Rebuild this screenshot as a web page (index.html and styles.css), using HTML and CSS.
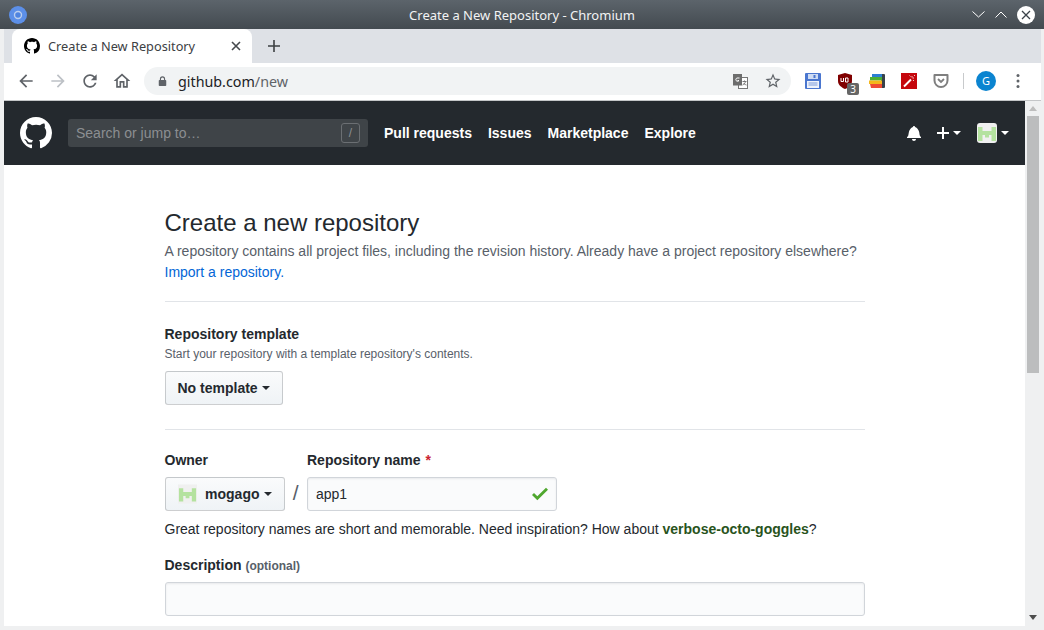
FILE: index.html
```html
<!DOCTYPE html>
<html lang="en">
<head>
  <meta charset="UTF-8">
  <title>Create a New Repository - Chromium</title>
  <link rel="stylesheet" href="styles.css">
</head>
<body>
  <svg class="defs" width="0" height="0">
    <symbol id="mark" viewBox="0 0 16 16"><path d="M8 0C3.58 0 0 3.58 0 8c0 3.54 2.29 6.53 5.47 7.59.4.07.55-.17.55-.38 0-.19-.01-.82-.01-1.49-2.01.37-2.53-.49-2.69-.94-.09-.23-.48-.94-.82-1.13-.28-.15-.68-.52-.01-.53.63-.01 1.08.58 1.23.82.72 1.21 1.87.87 2.33.66.07-.52.28-.87.51-1.07-1.78-.2-3.64-.89-3.64-3.95 0-.87.31-1.59.82-2.15-.08-.2-.36-1.02.08-2.12 0 0 .67-.21 2.2.82.64-.18 1.32-.27 2-.27.68 0 1.36.09 2 .27 1.53-1.04 2.2-.82 2.2-.82.44 1.1.16 1.92.08 2.12.51.56.82 1.27.82 2.15 0 3.07-1.87 3.75-3.65 3.95.29.25.54.73.54 1.48 0 1.07-.01 1.93-.01 2.2 0 .21.15.46.55.38A8.013 8.013 0 0016 8c0-4.42-3.58-8-8-8z"/></symbol>
    <symbol id="identicon" viewBox="0 0 20 20"><rect width="20" height="20" fill="#f0f0f0"/><path fill="#b4e29f" d="M1 4h4.500v14H1zM14.500 4H19v14h-4.500zM5.500 8h9v4h-9zM8 12h4v2.500H8z"/></symbol>
  </svg>

  <div class="titlebar">
    <svg class="chromium" width="18" height="18" viewBox="0 0 18 18"><circle cx="9" cy="9" r="9" fill="#5c8fe8"/><circle cx="9" cy="9" r="3.500" fill="#4f84e0" stroke="#bccfee" stroke-width="1.400"/></svg>
    <div class="window-title">Create a New Repository - Chromium</div>
    <div class="window-controls">
      <svg width="13" height="7" viewBox="0 0 13 7"><path d="M.5.5 6.500 6l6-5.500" fill="none" stroke="#fff"/></svg>
      <svg width="12" height="7" viewBox="0 0 12 7"><path d="M.5 6.500 6 1l5.500 5.500" fill="none" stroke="#fff"/></svg>
      <svg width="18" height="18" viewBox="0 0 18 18"><circle cx="9" cy="9" r="9" fill="#fff"/><path d="M5 5l8 8M13 5l-8 8" stroke="#3b4249" stroke-width="1.300"/></svg>
    </div>
  </div>

  <div class="window">
    <div class="tabstrip">
      <div class="tab">
        <svg class="favicon" width="16" height="16"><use href="#mark"/></svg>
        <span class="tab-title">Create a New Repository</span>
        <svg class="tab-close" width="10" height="10" viewBox="0 0 10 10"><path d="M1 1l8 8M9 1l-8 8" stroke="#45494d" stroke-width="1.600"/></svg>
      </div>
      <svg class="new-tab" width="12" height="12" viewBox="0 0 12 12"><path d="M6 0v12M0 6h12" stroke="#3c4043" stroke-width="1.600"/></svg>
    </div>

    <div class="toolbar">
      <svg class="tool back" width="20" height="20" viewBox="0 0 24 24"><path d="M20 11H7.830l5.590-5.590L12 4l-8 8 8 8 1.410-1.410L7.830 13H20v-2z"/></svg>
      <svg class="tool forward" width="20" height="20" viewBox="0 0 24 24"><path d="M4 11h12.170l-5.590-5.590L12 4l8 8-8 8-1.410-1.410L16.170 13H4v-2z"/></svg>
      <svg class="tool" width="20" height="20" viewBox="0 0 24 24"><path d="M17.650 6.350C16.200 4.900 14.210 4 12 4c-4.420 0-7.990 3.580-7.990 8s3.570 8 7.990 8c3.730 0 6.840-2.550 7.730-6h-2.080c-.82 2.330-3.040 4-5.650 4-3.310 0-6-2.690-6-6s2.690-6 6-6c1.660 0 3.140.69 4.220 1.780L13 11h7V4l-2.350 2.350z"/></svg>
      <svg class="tool" width="20" height="20" viewBox="0 0 24 24"><path d="M12 5.690l5 4.500V18h-2v-6H9v6H7v-7.810l5-4.500M12 3L2 12h3v8h6v-6h2v6h6v-8h3L12 3z"/></svg>
      <div class="omnibox">
        <svg width="9" height="11" viewBox="0 0 12 14"><path fill="#5f6368" d="M10 5H9.500V3.500a3.500 3.500 0 0 0-7 0V5H2a1 1 0 0 0-1 1v6a1 1 0 0 0 1 1h8a1 1 0 0 0 1-1V6a1 1 0 0 0-1-1zM4 3.500a2 2 0 0 1 4 0V5H4z"/></svg>
        <span class="url">github.com<span class="url-path">/new</span></span>
        <svg class="translate" width="15" height="15" viewBox="0 0 15 15"><rect x="5.500" y="3.500" width="9" height="11" fill="#fff" stroke="#777"/><rect width="9" height="11.500" fill="#6d6d6d"/><path d="M6.500 4H4a1.700 1.700 0 1 0 2 2.500H4.500" fill="none" stroke="#fff"/><path d="M9.500 7.500h4M11.500 6.500v1M12.500 7.500c-.5 2-1.500 3-3 3.500M10.500 9c.5 1 1.500 1.500 3 2" fill="none" stroke="#777"/></svg>
        <svg class="star" width="18" height="18" viewBox="0 0 24 24"><path fill="#5f6368" d="M22 9.240l-7.190-.62L12 2 9.190 8.630 2 9.240l5.460 4.730L5.820 21 12 17.270 18.180 21l-1.630-7.030L22 9.240zM12 15.400l-3.760 2.270 1-4.280-3.320-2.880 4.380-.38L12 6.100l1.710 4.040 4.380.38-3.320 2.880 1 4.280L12 15.400z"/></svg>
      </div>
      <div class="extensions">
        <svg width="16" height="16" viewBox="0 0 16 16"><rect width="16" height="16" rx="1" fill="#4a76cf"/><rect x="3" y="1" width="10" height="5" fill="#cfdcf3"/><rect x="8.500" y="2" width="2" height="3" fill="#4a76cf"/><rect x="2" y="8" width="12" height="7" fill="#eef2fa"/><path d="M3.500 10h9M3.500 12h9" stroke="#7d9bdb"/></svg>
        <div class="ublock">
          <svg width="14" height="16" viewBox="0 0 14 16"><path fill="#800000" d="M7 0l7 2v6c0 4-3.500 6.500-7 8-3.500-1.500-7-4-7-8V2z"/><path d="M3 5v3.500h2.500V5M7.500 5h2.500v4H7.500z" fill="none" stroke="#fff"/></svg>
          <span class="badge">3</span>
        </div>
        <svg width="16" height="16" viewBox="0 0 16 16"><path fill="#39424a" d="M12 1h3a1 1 0 0 1 1 1v12a1 1 0 0 1-1 1h-3z"/><path fill="#2c7fd3" d="M3 1h10v3H3z"/><path fill="#4caf35" d="M1 4h12v3.500H1z"/><path fill="#f4b71c" d="M0 7.500h13V11H0z"/><path fill="#ee4b35" d="M1 11h12v4H2z"/></svg>
        <svg width="16" height="16" viewBox="0 0 16 16"><rect width="16" height="16" fill="#c5070d"/><path d="M3 13.500 10 6.500" stroke="#fff" stroke-width="2"/><path d="M11 3v1.500M13 5h-1.500M8.500 2.500l1 1M14 2l-1 1M13 8l-1-1" stroke="#f3c7c7"/></svg>
        <svg width="16" height="16" viewBox="0 0 16 16"><path d="M1.500 2h13v5.500a6.500 6.500 0 0 1-13 0z" fill="#fff" stroke="#7f7f7f" stroke-width="2" stroke-linejoin="round"/><path d="M5 6l3 3 3-3" fill="none" stroke="#7f7f7f" stroke-width="1.800"/></svg>
      </div>
      <div class="toolbar-sep"></div>
      <div class="profile">G</div>
      <svg class="menu-dots" width="4" height="14" viewBox="0 0 4 14"><circle cx="2" cy="1.500" r="1.500"/><circle cx="2" cy="7" r="1.500"/><circle cx="2" cy="12.500" r="1.500"/></svg>
    </div>

    <div class="viewport">
      <div class="page">
        <header class="gh-header">
          <svg class="gh-logo" width="32" height="32"><use href="#mark"/></svg>
          <div class="gh-search">
            <span>Search or jump to…</span>
            <span class="slash-key">/</span>
          </div>
          <nav class="gh-nav">
            <a>Pull requests</a>
            <a>Issues</a>
            <a>Marketplace</a>
            <a>Explore</a>
          </nav>
          <div class="gh-actions">
            <svg class="bell" width="14" height="16" viewBox="0 0 14 16"><path d="M14 12v1H0v-1l.73-.58c.77-.77.81-2.550 1.190-4.420C2.690 3.230 6 2 6 2c0-.55.45-1 1-1s1 .45 1 1c0 0 3.390 1.230 4.160 5 .38 1.880.42 3.660 1.190 4.420l.65.58zm-7 4c1.110 0 2-.89 2-2H5c0 1.110.89 2 2 2z"/></svg>
            <span class="gh-plus">
              <svg width="12" height="12" viewBox="0 0 12 12"><path d="M6 0v12M0 6h12" stroke="#fff" stroke-width="2"/></svg>
              <i class="caret caret-white"></i>
            </span>
            <span class="gh-avatar">
              <svg class="rounded" width="20" height="20"><use href="#identicon"/></svg>
              <i class="caret caret-white"></i>
            </span>
          </div>
        </header>

        <main class="content">
          <div class="subhead">
            <h1>Create a new repository</h1>
            <p>A repository contains all project files, including the revision history. Already have a project repository elsewhere?<br><a class="link">Import a repository.</a></p>
          </div>

          <div class="template-section">
            <label class="field-label">Repository template</label>
            <p class="note">Start your repository with a template repository's contents.</p>
            <button class="btn">No template <i class="caret"></i></button>
          </div>

          <div class="owner-section">
            <div class="owner-row">
              <div>
                <label class="field-label">Owner</label>
                <button class="btn owner-btn">
                  <svg width="20" height="20"><use href="#identicon"/></svg>
                  mogago <i class="caret"></i>
                </button>
              </div>
              <span class="owner-slash">/</span>
              <div>
                <label class="field-label">Repository name <span class="required">*</span></label>
                <div class="input name-input">
                  <span>app1</span>
                  <svg width="16" height="14" viewBox="0 3 12 10.500" preserveAspectRatio="none"><path fill="#4fa72e" d="M12 5l-8 8-4-4 1.500-1.500L4 10l6.500-6.500z"/></svg>
                </div>
              </div>
            </div>
            <p class="hint">Great repository names are short and memorable. Need inspiration? How about <strong class="suggestion">verbose-octo-goggles</strong>?</p>
            <label class="field-label desc-label">Description <span class="optional">(optional)</span></label>
            <div class="input desc-input"></div>
          </div>
        </main>
      </div>

      <div class="scrollbar">
        <i class="arrow-up"></i>
        <div class="thumb"></div>
        <i class="arrow-down"></i>
      </div>
    </div>
  </div>
</body>
</html>
```

FILE: styles.css
```css
html, body {
  margin: 0;
  height: 630px;
  overflow: hidden;
}
body {
  display: flex;
  flex-direction: column;
  font-family: "Liberation Sans", Arial, sans-serif;
  font-size: 14px;
  color: #24292e;
  background: #eff0f1;
}
.defs {
  position: absolute;
}
button {
  font-family: inherit;
}

/* window frame */
.titlebar {
  height: 29px;
  flex: none;
  display: flex;
  align-items: center;
  justify-content: space-between;
  padding: 0 9px;
  background: linear-gradient(#5c646b, #434a50);
}
.chromium {
  margin-right: 45px;
}
.window-title {
  flex: 1;
  text-align: center;
  font: 13px "Noto Sans", sans-serif;
  color: #f2f3f4;
}
.window-controls {
  display: flex;
  align-items: center;
  gap: 10px;
}
.window {
  flex: 1;
  min-height: 0;
  display: flex;
  flex-direction: column;
  padding: 0 3px 4px 4px;
}

/* tabs */
.tabstrip {
  height: 34px;
  flex: none;
  display: flex;
  align-items: center;
  background: #dee1e6;
  padding-left: 8px;
}
.tab {
  width: 240px;
  height: 34px;
  box-sizing: border-box;
  display: flex;
  align-items: center;
  padding: 0 11px 0 12px;
  background: #fff;
  border-radius: 8px 8px 0 0;
}
.favicon {
  flex: none;
}
.tab-title {
  flex: 1;
  margin-left: 8px;
  font: 12.750px "Noto Sans", sans-serif;
  color: #3c4043;
}
.new-tab {
  margin-left: 16px;
}

/* toolbar */
.toolbar {
  height: 38px;
  box-sizing: border-box;
  flex: none;
  display: flex;
  align-items: center;
  background: #fff;
  border-bottom: 1px solid #c4c6c8;
  padding: 0 0 1px 12px;
}
.tool {
  fill: #5f6368;
  margin-right: 12px;
}
.forward {
  fill: #bdc1c6;
}
.omnibox {
  width: 647px;
  height: 28px;
  display: flex;
  align-items: center;
  box-sizing: border-box;
  padding: 0 9px 0 14px;
  border-radius: 14px;
  background: #f1f3f4;
}
.url {
  flex: 1;
  margin-left: 11px;
  font: 14.300px "Noto Sans", sans-serif;
  color: #202124;
}
.url-path {
  color: #5f6368;
}
.translate {
  margin-right: 16px;
}
.extensions {
  display: flex;
  align-items: center;
  gap: 16px;
  margin-left: 14px;
}
.ublock {
  position: relative;
  height: 16px;
  margin: 0 1px;
}
.ublock svg {
  display: block;
}
.badge {
  position: absolute;
  left: 9px;
  top: 10px;
  width: 12px;
  height: 12px;
  border-radius: 2px;
  background: #666;
  color: #fff;
  font: 10px/12px "Noto Sans", sans-serif;
  text-align: center;
}
.toolbar-sep {
  width: 1px;
  height: 16px;
  margin-left: 14px;
  background: #c8cacc;
}
.profile {
  width: 20px;
  height: 20px;
  margin-left: 12px;
  border-radius: 50%;
  background: #0b84d0;
  color: #fff;
  font: 11px/20px "Noto Sans", sans-serif;
  text-align: center;
}
.menu-dots {
  margin-left: 20px;
  fill: #5f6368;
}

/* page + scrollbar */
.viewport {
  flex: 1;
  min-height: 0;
  display: flex;
}
.page {
  flex: 1;
  min-width: 0;
  overflow: hidden;
  background: #fff;
}
.scrollbar {
  width: 16px;
  flex: none;
  display: flex;
  flex-direction: column;
  align-items: center;
  padding: 5px 0 6px;
  box-sizing: border-box;
  background: #eff0f1;
}
.thumb {
  width: 12px;
  height: 257px;
  margin-top: 5px;
  background: #bcbdbe;
}
.arrow-up {
  border: 4px solid transparent;
  border-top: 0;
  border-bottom: 5px solid #bdbdbd;
}
.arrow-down {
  margin-top: auto;
  border: 4px solid transparent;
  border-bottom: 0;
  border-top: 5px solid #4d4d4d;
}

/* github header */
.gh-header {
  height: 64px;
  display: flex;
  align-items: center;
  padding: 0 16px;
  background: #24292e;
  color: #fff;
}
.gh-logo {
  fill: #fff;
}
.gh-search {
  width: 300px;
  height: 28px;
  box-sizing: border-box;
  margin-left: 16px;
  padding: 0 8px;
  display: flex;
  align-items: center;
  justify-content: space-between;
  border-radius: 3px;
  background: #3f4448;
  color: #8c8f92;
}
.slash-key {
  width: 19px;
  height: 20px;
  box-sizing: border-box;
  border: 1px solid #6b6f73;
  border-radius: 3px;
  font-size: 12px;
  line-height: 18px;
  text-align: center;
}
.gh-nav {
  display: flex;
  gap: 16px;
  margin-left: 16px;
  font-weight: bold;
}
.gh-actions {
  margin-left: auto;
  display: flex;
  align-items: center;
  gap: 16px;
}
.bell {
  fill: #fff;
}
.gh-plus, .gh-avatar {
  display: flex;
  align-items: center;
  gap: 4px;
}
.rounded {
  border-radius: 3px;
}
.caret {
  display: inline-block;
  vertical-align: middle;
  border: 4px solid transparent;
  border-top: 4px solid #24292e;
  border-bottom: 0;
}
.caret-white {
  border-top-color: #fff;
}

/* form */
.content {
  width: 700px;
  margin: 0 auto;
  padding-top: 40px;
}
.subhead {
  padding-bottom: 18px;
  border-bottom: 1px solid #e1e4e8;
}
h1 {
  margin: 0;
  font-size: 24px;
  font-weight: normal;
  line-height: 36px;
}
.subhead p {
  margin: 0;
  color: #586069;
  line-height: 21px;
}
.link {
  color: #0366d6;
}
.field-label {
  display: block;
  font-weight: bold;
  line-height: 21px;
}
.template-section {
  padding: 22px 0 24px;
  border-bottom: 1px solid #e1e4e8;
}
.note {
  margin: 0 0 8px;
  font-size: 12px;
  line-height: 18px;
  color: #586069;
}
.btn {
  height: 34px;
  box-sizing: border-box;
  padding: 0 12px;
  display: inline-flex;
  align-items: center;
  gap: 4px;
  border: 1px solid rgba(27, 31, 35, .2);
  border-radius: 3px;
  background: linear-gradient(#fafbfc, #eff3f6);
  color: #24292e;
  font-size: 14px;
  font-weight: bold;
}
.owner-section {
  padding-top: 20px;
}
.owner-row {
  display: flex;
}
.owner-row .field-label {
  margin-bottom: 6px;
}
.owner-btn {
  width: 120px;
}
.owner-btn svg {
  margin-right: 4.500px;
}
.owner-slash {
  width: 22.500px;
  margin-top: 26px;
  text-align: center;
  font-size: 21px;
  line-height: 34px;
  color: #586069;
}
.required {
  margin-left: 1px;
  color: #cb2431;
}
.input {
  height: 34px;
  box-sizing: border-box;
  padding: 0 8px;
  display: flex;
  align-items: center;
  border: 1px solid #d1d5da;
  border-radius: 3px;
  background: #fafbfc;
  box-shadow: inset 0 1px 2px rgba(27, 31, 35, .075);
}
.name-input {
  width: 250px;
  justify-content: space-between;
}
.hint {
  margin: 8px 0 0;
  line-height: 21px;
}
.suggestion {
  color: #28531c;
}
.desc-label {
  margin-top: 15px;
  margin-bottom: 5px;
}
.optional {
  font-size: 12px;
  color: #586069;
}
.desc-input {
  width: 100%;
}
```
